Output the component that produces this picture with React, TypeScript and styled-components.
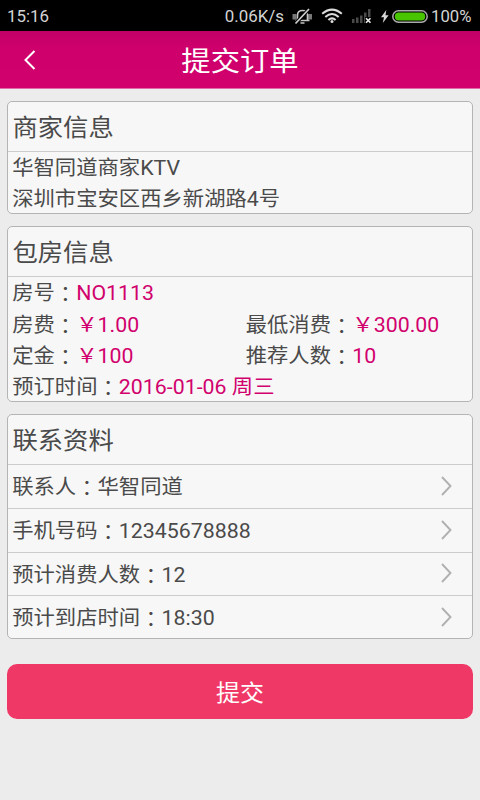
import React from "react";
import styled, {createGlobalStyle, css} from "styled-components";

const GlobalStyle = createGlobalStyle`
  * {
    box-sizing: border-box;
  }
  body {
    margin: 0;
    background: #edecec;
  }
`

// letters are a little flatter than the font draws them
const flatText = css`
  transform: scaleY(0.9375);
`

const Page = styled.div`
  display: flex;
  flex-direction: column;
  width: 480px;
  height: 800px;
  overflow: hidden;
  background: #edecec;
  color: #4a4a4a;
  font-family: Roboto, "Noto Sans CJK SC", sans-serif;
`

const StatusBar = styled.div`
  display: flex;
  align-items: center;
  justify-content: space-between;
  height: 31px;
  padding: 1px 7px 0 7px;
  background: #000;
  color: #d4d4d4;
  font-size: 16.9px;
  line-height: 31px;
`

const StatusItems = styled.div`
  display: flex;
  align-items: center;
`

const StatusText = styled.span`
  ${flatText}
`

const StatusIcon = styled.svg<{ $gap: number }>`
  flex: none;
  margin-left: ${({$gap}) => $gap}px;
`

const Percent = styled(StatusText)`
  width: 42px;
  margin-left: 3px;
  font-size: 16.7px;
`

const Header = styled.header`
  display: grid;
  grid-template-columns: 60px 1fr 60px;
  align-items: center;
  height: 58px;
  border-bottom: 1px solid #e36aa8;
  background: linear-gradient(#c00066, #ce006c 16px, #d1006d);
  color: #fff;
`

const BackButton = styled.button`
  display: flex;
  justify-content: center;
  padding: 0;
  border: 0;
  background: none;
`

const Title = styled.h1`
  margin: 0;
  padding-top: 6px;
  font-size: 29.33px;
  font-weight: 400;
  line-height: 51px;
  text-align: center;
  ${flatText}
`

const Content = styled.main`
  display: flex;
  flex-direction: column;
  gap: 12.5px;
  padding: 12px 7px 0;
`

const Card = styled.section`
  border: 1px solid #b4b4b4;
  border-radius: 5px;
  background: #f7f7f7;
`

const CardTitle = styled.h2`
  height: 49.1px;
  margin: 0;
  padding: 2.4px 0 0 4.4px;
  font-size: 25.33px;
  font-weight: 400;
  line-height: 49px;
  ${flatText}
`

const Lines = styled.div`
  display: grid;
  grid-template-columns: 233.5px 1fr;
  grid-auto-rows: 31.15px;
  margin-bottom: -1.5px;
  padding-left: 4.2px;
  border-top: 1px solid #ccc;
  font-size: 21.33px;
  line-height: 31.600px;
`

const Line = styled.div<{ $wide?: boolean }>`
  grid-column: ${({$wide}) => $wide ? "1 / -1" : "auto"};
  white-space: nowrap;
  ${flatText}
`

const Colon = styled.span`
  font-family: "Noto Sans CJK TC", sans-serif;
  line-height: 1;
  vertical-align: -2.5px;
`

const Value = styled.span`
  color: #d1006d;
`

const Row = styled.div`
  display: flex;
  align-items: center;
  justify-content: space-between;
  height: 43.75px;
  padding: 0 20px 0 4.2px;
  border-top: 1px solid #ccc;
  font-size: 21.33px;
  line-height: 43px;

  &:last-child {
    margin-bottom: -0.8px;
  }

  svg {
    margin-bottom: 1.5px;
  }
`

const RowText = styled.span`
  ${flatText}
`

const Submit = styled.button`
  height: 55px;
  margin-top: 12.6px;
  padding: 0;
  border: 0;
  border-radius: 10px;
  background: #ef3866;
  color: #fff;
  font-family: inherit;
  font-size: 24px;
`

const SubmitText = styled.span`
  display: block;
  padding-top: 5px;
  line-height: 50px;
  ${flatText}
`

const contacts = [
    {label: "联系人", value: "华智同道"},
    {label: "手机号码", value: "12345678888"},
    {label: "预计消费人数", value: "12"},
    {label: "预计到店时间", value: "18:30"},
]

function MutedIcon() {
    return (
        <StatusIcon $gap={8} width="21" height="17" viewBox="0 0 21 17" fill="none">
            <path d="M.5 6h4v5.500h-4zM16 6h4v5.500h-4z" fill="#777"/>
            <path d="M3.500 12.500h14M5.500 12.500V7.500c0-3.500 2-5 5-5s5 1.500 5 5v5M8.500 15h4"
                  stroke="#c4c4c4" strokeWidth="1.600"/>
            <path d="M3.500 15.500L17 1" stroke="#000" strokeWidth="3.600"/>
            <path d="M3.500 15.500L17 1" stroke="#d0d0d0" strokeWidth="1.700"/>
        </StatusIcon>
    )
}

function WifiIcon() {
    return (
        <StatusIcon $gap={8} width="22" height="16" viewBox="0 0 22 16" fill="none"
                    stroke="#dcdcdc" strokeWidth="2">
            <path d="M1.200 5.800Q11-2.500 20.800 5.800M4.300 9Q11 3 17.700 9M7.400 12Q11 8.800 14.600 12"/>
            <circle cx="11" cy="13.500" r="1.500" fill="#dcdcdc" stroke="none"/>
        </StatusIcon>
    )
}

function SignalIcon() {
    return (
        <StatusIcon $gap={9} width="20" height="16" viewBox="0 0 20 16">
            <path d="M0 11h2.500v4H0zM4 9.500h2.500V15H4zM8 7.500h2.500V15H8zM12 4.500h2.500V15H12zM16 1h2.500v14H16z"
                  fill="#4a4a4a"/>
            <path d="M13 9h7v7h-7z" fill="#000"/>
            <path d="M14 10.300l4.500 4.500M18.500 10.300L14 14.800" stroke="#eee" strokeWidth="1.600"/>
        </StatusIcon>
    )
}

function BatteryIcon() {
    return (
        <>
            <StatusIcon $gap={9} width="8" height="13" viewBox="0 0 8 13">
                <path d="M5.300 0L0 7.300h3L1.800 13 7.600 5.300H4.500z" fill="#d8d8d8"/>
            </StatusIcon>
            <StatusIcon $gap={3} width="36" height="13" viewBox="0 0 36 13">
                <rect x=".8" y=".8" width="34.400" height="11.400" rx="5.700" fill="#000"
                      stroke="#aaa" strokeWidth="1.500"/>
                <rect x="2.800" y="2.600" width="30.400" height="7.800" rx="3.900" fill="#49c400"/>
            </StatusIcon>
        </>
    )
}

function Arrow() {
    return (
        <svg width="11" height="20" viewBox="0 0 11 20" fill="none" stroke="#b0b0b0" strokeWidth="1.900">
            <path d="M1 1l8.500 9L1 19"/>
        </svg>
    )
}

function Field({label, value, wide}: { label: string, value: string, wide?: boolean }) {
    return (
        <Line $wide={wide}>{label}<Colon>：</Colon><Value>{value}</Value></Line>
    )
}

function App() {
    return (
        <Page>
            <GlobalStyle/>
            <StatusBar>
                <StatusText>15:16</StatusText>
                <StatusItems>
                    <StatusText>0.06K/s</StatusText>
                    <MutedIcon/>
                    <WifiIcon/>
                    <SignalIcon/>
                    <BatteryIcon/>
                    <Percent>100%</Percent>
                </StatusItems>
            </StatusBar>
            <Header>
                <BackButton aria-label="返回">
                    <svg width="12" height="20" viewBox="0 0 12 20" fill="none" stroke="#fff" strokeWidth="2">
                        <path d="M10.500 1L1.500 10l9 9"/>
                    </svg>
                </BackButton>
                <Title>提交订单</Title>
            </Header>
            <Content>
                <Card>
                    <CardTitle>商家信息</CardTitle>
                    <Lines>
                        <Line $wide>华智同道商家KTV</Line>
                        <Line $wide>深圳市宝安区西乡新湖路4号</Line>
                    </Lines>
                </Card>
                <Card>
                    <CardTitle>包房信息</CardTitle>
                    <Lines>
                        <Field label="房号" value="NO1113" wide/>
                        <Field label="房费" value="￥1.00"/>
                        <Field label="最低消费" value="￥300.00"/>
                        <Field label="定金" value="￥100"/>
                        <Field label="推荐人数" value="10"/>
                        <Field label="预订时间" value="2016-01-06 周三" wide/>
                    </Lines>
                </Card>
                <Card>
                    <CardTitle>联系资料</CardTitle>
                    {contacts.map(({label, value}) => (
                        <Row key={label}>
                            <RowText>{label}<Colon>：</Colon>{value}</RowText>
                            <Arrow/>
                        </Row>
                    ))}
                </Card>
                <Submit><SubmitText>提交</SubmitText></Submit>
            </Content>
        </Page>
    )
}

export default App
